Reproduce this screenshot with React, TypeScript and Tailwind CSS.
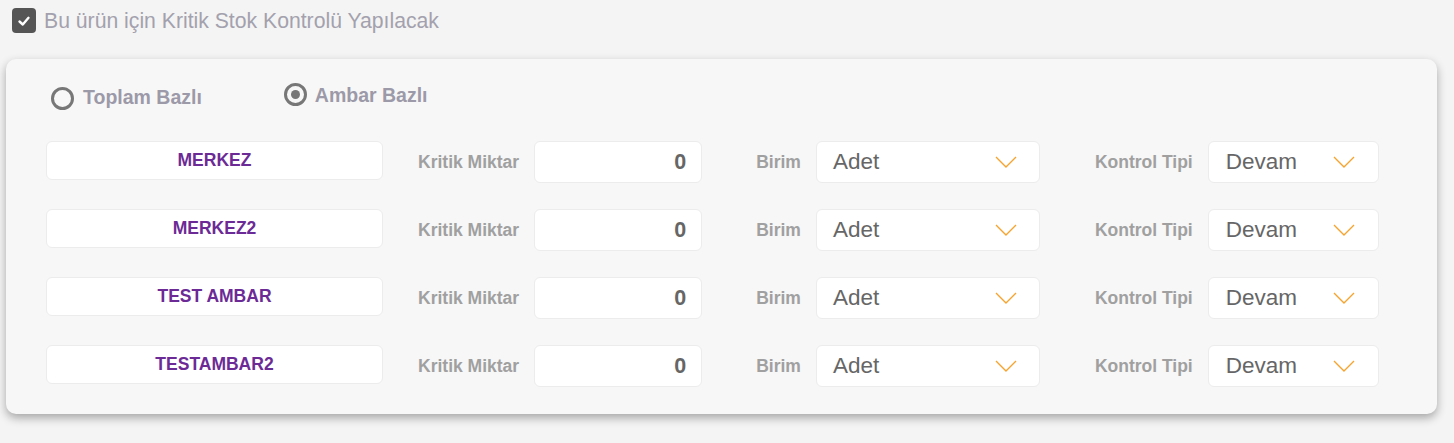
import React from "react";

const rows = ["MERKEZ", "MERKEZ2", "TEST AMBAR", "TESTAMBAR2"];

function Chevron() {
  return (
    <svg width="22" height="12" viewBox="0 0 22 12" fill="none">
      <polyline points="1,1 11,11 21,1" stroke="#f5a430" strokeWidth="1.4" fill="none" />
    </svg>
  );
}

function Select({ value, width, pl, pr }: { value: string; width: string; pl: string; pr: string }) {
  return (
    <div
      className={`${width} ${pl} ${pr} h-[42px] bg-white rounded-[6px] border border-[#ececec] flex items-center justify-between text-[22.5px] text-[#666666]`}
    >
      <span>{value}</span>
      <Chevron />
    </div>
  );
}

export default function App() {
  return (
    <div
      className="w-[1454px] h-[443px] bg-[#f4f4f4] pt-[8px]"
      style={{ fontFamily: '"Liberation Sans", Arial, sans-serif' }}
    >
      <div className="flex items-center pl-[12px] h-[25px]">
        <div className="w-[24px] h-[25px] rounded-[4px] bg-[#555555] flex items-center justify-center">
          <svg width="14" height="14" viewBox="0 0 14 14" fill="none">
            <polyline points="2.5,7.5 5.8,10.5 11.5,3.8" stroke="white" strokeWidth="2.4" strokeLinecap="round" strokeLinejoin="round" />
          </svg>
        </div>
        <span className="ml-[8px] text-[21.2px] text-[#a3a1ad] leading-none">Bu ürün için Kritik Stok Kontrolü Yapılacak</span>
      </div>

      <div className="ml-[6px] mt-[26px] w-[1431px] h-[355px] bg-[#f7f7f7] rounded-[10px] shadow-[0_4px_10px_rgba(0,0,0,0.32)] pt-[24px] px-[40px]">
        <div className="flex items-center h-[26px] pl-[5px] font-bold text-[19.5px] text-[#9c99a8]">
          <div className="flex items-center mt-[4px]">
            <div className="w-[23px] h-[23px] rounded-full border-[3px] border-[#777777]" />
            <span className="ml-[9px]">Toplam Bazlı</span>
          </div>
          <div className="flex items-center ml-[82px]">
            <div className="w-[23px] h-[23px] rounded-full border-[3px] border-[#777777] flex items-center justify-center mb-[4px]">
              <div className="w-[9px] h-[9px] rounded-full bg-[#777777]" />
            </div>
            <span className="ml-[8px]">Ambar Bazlı</span>
          </div>
        </div>

        <div className="mt-[32px] flex flex-col gap-[26px]">
          {rows.map((r) => (
            <div key={r} className="flex items-start h-[42px]">
              <div className="w-[337px] h-[39px] bg-white rounded-[6px] border border-[#ececec] flex items-center justify-center font-bold text-[17.5px] text-[#6c2a96]">
                {r}
              </div>
              <div className="ml-[35px] h-[42px] flex items-center font-bold text-[17.5px] text-[#a0a0a0]">Kritik Miktar</div>
              <div className="ml-[15px] w-[168px] h-[42px] bg-white rounded-[6px] border border-[#ececec] flex items-center justify-end pr-[15px] font-bold text-[21.5px] text-[#666666]">
                0
              </div>
              <div className="ml-[54px] h-[42px] flex items-center font-bold text-[17.5px] text-[#a0a0a0]">Birim</div>
              <div className="ml-[15px]">
                <Select value="Adet" width="w-[224px]" pl="pl-[16px]" pr="pr-[22px]" />
              </div>
              <div className="ml-[55px] h-[42px] flex items-center font-bold text-[17.5px] text-[#a0a0a0]">Kontrol Tipi</div>
              <div className="ml-[15px]">
                <Select value="Devam" width="w-[171px]" pl="pl-[17px]" pr="pr-[23px]" />
              </div>
            </div>
          ))}
        </div>
      </div>
    </div>
  );
}
